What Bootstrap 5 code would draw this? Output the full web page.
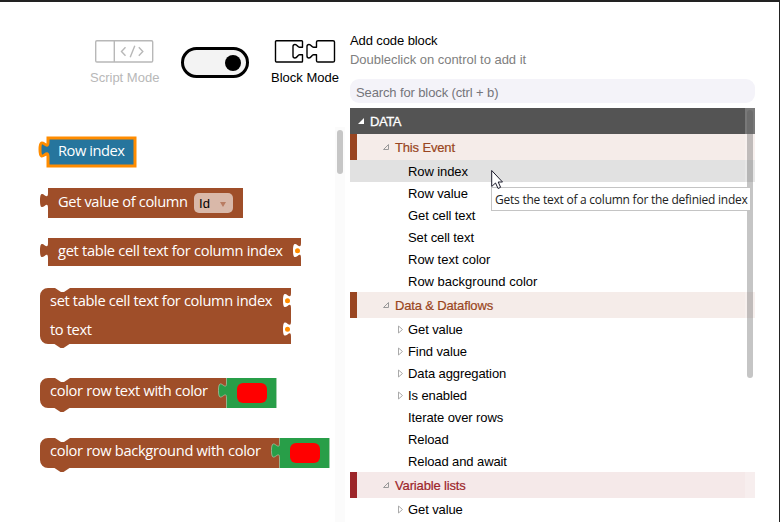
<!DOCTYPE html>
<html lang="en">
<head>
<meta charset="utf-8">
<title>Block editor</title>
<link rel="stylesheet" href="https://cdn.jsdelivr.net/npm/bootstrap@5.3.0/dist/css/bootstrap.min.css">
<style>
body{font:13px/20px "Liberation Sans",Arial,sans-serif;color:#000;background:#fff;width:780px;height:522px}
.app-frame{width:780px;height:522px;border-top:2px solid #222;border-right:1px solid #222;background:#fff}
.left-pane{width:345px}
.mode-bar{height:125px;padding:37px 0 0 90px}
.mode-item{width:70px;height:50px}
.mode-item svg{display:block}
.mode-item.off{color:#b8b8b8}
.mode-item .lbl{white-space:nowrap;line-height:18px;margin-top:5px}
.toggle{width:68px;height:31px;border:3px solid #000;background:#f3f3f3;margin:8px 22px 0 21px;padding-right:5px}
.knob{width:16px;height:16px;background:#000}
.canvas-text text{font-family:"Open Sans","Noto Sans",sans-serif;font-size:14.67px;fill:#fff}
.track-l{width:10px;background:#fbfbfb;padding:3px 2px 0}
.thumb-l{height:44px;border-radius:3px;background:#c6c6c6}
.right-pane{width:405px;margin-left:5px;padding-top:29px;letter-spacing:-.1px}
.pane-title{line-height:19px}
.pane-hint{color:#808080;letter-spacing:-.03px}
.search{height:24px;border-radius:9px;background:#f4f3f9;color:#75757b;padding:0 6px;margin-top:9px;line-height:27px;letter-spacing:-.12px}
.tree{margin-top:5px;height:414px}
.tree-row{height:22px;line-height:23px;padding-left:58px;white-space:nowrap}
.tree-row.wide{letter-spacing:0}
.tree-row.sub{padding-left:48px}
.tree-row.sub svg{width:5px;margin-right:5px}
.root{height:26px;background:#545454;color:#fff;padding-left:7px;white-space:nowrap;-webkit-text-stroke:.3px #fff;letter-spacing:-.4px}
.group{height:26px;background:#f5ece9;color:#994521;border-left:7px solid #994521;padding-left:25px;white-space:nowrap;-webkit-text-stroke:.2px currentColor;letter-spacing:-.15px}
.root span,.group span{padding-top:1px}
.group.red{background:#f5e9e9;color:#9c2529;border-color:#9c2529}
.hov{background:#e1e1e1}
.track-r{top:0;right:0;width:10px;height:414px;background:rgba(255,255,255,.22);padding:2px 2px 0}
.thumb-r{height:268px;border-radius:3px;background:rgba(85,85,85,.34)}
.tip{left:141px;top:79px;width:260px;height:24px;border:1px solid #c4c4c4;background:#fff;color:#222;font:12px/23px "Open Sans","Noto Sans",sans-serif;padding-left:3px;white-space:nowrap;letter-spacing:-.24px}
.cursor{left:141px;top:61px}
</style>
<script src="https://cdn.jsdelivr.net/npm/bootstrap@5.3.0/dist/js/bootstrap.bundle.min.js"></script>
</head>
<body class="overflow-hidden">
<div class="app-frame d-flex overflow-hidden">
  <div class="left-pane d-flex flex-column flex-shrink-0">
    <div class="mode-bar d-flex align-items-start flex-shrink-0">
      <div class="mode-item off">
        <svg width="70" height="25" fill="none" stroke="currentColor" stroke-width="1.4"><rect x="5.7" y="1.7" width="57" height="21.3" rx="1.2"/><path d="M24.3 1.7V23M35.500 8.300l-4 4.200 4 4.200M48.800 8.300l4 4.200-4 4.200M44.800 6.700l-4.600 11.600"/></svg>
        <div class="lbl"><span>Script Mode</span></div>
      </div>
      <div class="toggle rounded-pill d-flex align-items-center justify-content-end flex-shrink-0"><div class="knob rounded-circle"></div></div>
      <div class="mode-item">
        <svg width="70" height="25" fill="none" stroke="#000" stroke-width="1.4" stroke-linejoin="round"><path d="M31.500 8.200V2.500Q31.500 1.700 30.700 1.700H5.500Q4.500 1.700 4.500 2.700V22Q4.500 23 5.500 23H30.700Q31.500 23 31.500 22.200V15.800H28.500C26.500 15.800 26.500 19 24 19Q22 19 22 17V7.500Q22 5.500 24 5.500C26.500 5.500 26.500 8.200 28.500 8.200Z"/><path d="M45.500 8.200V3Q45.500 1.700 47 1.700H62Q63.500 1.700 63.500 3V21.700Q63.500 23 62 23H47Q45.500 23 45.500 21.700V15.800H42.500C40.500 15.800 40.500 19 38 19Q36 19 36 17V7.500Q36 5.500 38 5.500C40.500 5.500 40.500 8.200 42.500 8.200Z"/></svg>
        <div class="lbl"><span>Block Mode</span></div>
      </div>
    </div>
    <div class="d-flex flex-grow-1">
      <svg class="canvas-text flex-shrink-0" width="335" height="395" viewBox="0 127 335 395">
        <path d="M48 138H135V166H48V157c0-10-8 8-8-7.500s8 2.500 8-7.500Z" fill="#26759d" stroke="#ff8c00" stroke-width="3"/>
        <text x="58" y="156" textLength="67">Row index</text>
        <g fill="#9f4e29">
          <path d="M48 188h195v30H48v-10c0-10-8 8-8-7.500s8 2.500 8-7.500Z"/>
          <path d="M48 238h253v28H48v-8c0-10-8 8-8-7.500s8 2.500 8-7.500Z"/>
          <path d="M40 296a8 8 0 0 1 8-8h7l6 4h3l6-4H291V344H69.500l-6 4h-3l-6-4H48a8 8 0 0 1-8-8Z"/>
          <path d="M40 386a8 8 0 0 1 8-8h7l6 4h3l6-4H227V408H69.500l-6 4h-3l-6-4H48a8 8 0 0 1-8-8Z"/>
          <path d="M40 446a8 8 0 0 1 8-8h7l6 4h3l6-4H280V468H69.500l-6 4h-3l-6-4H48a8 8 0 0 1-8-8Z"/>
        </g>
        <g fill="#fff">
          <path d="M301 243c0 10-8-8-8 7.500s8-2.500 8 7.500Z"/>
          <path d="M291 293c0 10-8-8-8 7.500s8-2.500 8 7.500Z"/>
          <path d="M291 321.500c0 10-8-8-8 7.500s8-2.500 8 7.500Z"/>
        </g>
        <g fill="#ff8c00"><circle cx="297.500" cy="250.700" r="2.500"/><circle cx="287.500" cy="300.700" r="2.500"/><circle cx="287.500" cy="329.200" r="2.500"/></g>
        <g fill="#289e48">
          <path d="M226.500 378h50v30h-50v-10c0-10-8 8-8-7.500s8 2.500 8-7.500Z"/>
          <path d="M279.500 438h50v30h-50v-10c0-10-8 8-8-7.500s8 2.500 8-7.500Z"/>
        </g>
        <g fill="none" stroke="#a9cdb0" stroke-width=".7">
          <path d="M276.500 378v30M226.500 408v-10c0-10-8 8-8-7.500s8 2.500 8-7.500v-5"/>
          <path d="M329.500 438v30M279.500 468v-10c0-10-8 8-8-7.500s8 2.500 8-7.500v-5"/>
        </g>
        <rect x="237" y="383" width="30" height="20" rx="6" fill="#f00"/>
        <rect x="290" y="443" width="30" height="20" rx="6" fill="#f00"/>
        <rect x="194" y="193" width="39" height="20" rx="5" fill="#d9b8a9"/>
        <text x="199" y="208" textLength="11" style="fill:#000;font-size:13px;font-family:'Liberation Sans',sans-serif">Id</text>
        <path d="M220 202h6l-3 5Z" fill="#b97c62"/>
        <text x="58" y="207" textLength="130">Get value of column</text>
        <text x="58" y="256" textLength="225">get table cell text for column index</text>
        <text x="50" y="306" textLength="222.500">set table cell text for column index</text>
        <text x="50" y="335" textLength="42">to text</text>
        <text x="50" y="396" textLength="158">color row text with color</text>
        <text x="50" y="456" textLength="211">color row background with color</text>
      </svg>
      <div class="track-l flex-shrink-0"><div class="thumb-l"></div></div>
    </div>
  </div>
  <div class="right-pane flex-shrink-0">
    <div class="pane-title"><span>Add code block</span></div>
    <div class="pane-hint"><span>Doubleclick on control to add it</span></div>
    <div class="search"><span>Search for block (ctrl + b)</span></div>
    <div class="tree position-relative overflow-hidden">
      <div class="root d-flex align-items-center"><svg width="13" height="8"><path d="M1 7h6V1Z" fill="#fff"/></svg><span>DATA</span></div>
      <div class="group d-flex align-items-center"><svg width="13" height="8"><path d="M1.500 6.500h5v-5Z" fill="none" stroke="#999"/></svg><span>This Event</span></div>
      <div class="tree-row hov"><span>Row index</span></div>
      <div class="tree-row"><span>Row value</span></div>
      <div class="tree-row"><span>Get cell text</span></div>
      <div class="tree-row"><span>Set cell text</span></div>
      <div class="tree-row wide"><span>Row text color</span></div>
      <div class="tree-row wide"><span>Row background color</span></div>
      <div class="group d-flex align-items-center"><svg width="13" height="8"><path d="M1.500 6.500h5v-5Z" fill="none" stroke="#999"/></svg><span>Data &amp; Dataflows</span></div>
      <div class="tree-row sub d-flex align-items-center"><svg height="9"><path d="M.5 1v7L4.500 4.500Z" fill="none" stroke="#aaa"/></svg><span>Get value</span></div>
      <div class="tree-row sub d-flex align-items-center"><svg height="9"><path d="M.5 1v7L4.500 4.500Z" fill="none" stroke="#aaa"/></svg><span>Find value</span></div>
      <div class="tree-row sub d-flex align-items-center"><svg height="9"><path d="M.5 1v7L4.500 4.500Z" fill="none" stroke="#aaa"/></svg><span>Data aggregation</span></div>
      <div class="tree-row sub d-flex align-items-center"><svg height="9"><path d="M.5 1v7L4.500 4.500Z" fill="none" stroke="#aaa"/></svg><span>Is enabled</span></div>
      <div class="tree-row"><span>Iterate over rows</span></div>
      <div class="tree-row"><span>Reload</span></div>
      <div class="tree-row"><span>Reload and await</span></div>
      <div class="group red d-flex align-items-center"><svg width="13" height="8"><path d="M1.500 6.500h5v-5Z" fill="none" stroke="#999"/></svg><span>Variable lists</span></div>
      <div class="tree-row sub d-flex align-items-center"><svg height="9"><path d="M.5 1v7L4.500 4.500Z" fill="none" stroke="#aaa"/></svg><span>Get value</span></div>
      <div class="track-r position-absolute"><div class="thumb-r"></div></div>
      <div class="tip position-absolute"><span>Gets the text of a column for the definied index</span></div>
      <svg class="cursor position-absolute" width="14" height="20"><path d="M.7 1.500V17.500L4.500 14l2.600 5.500 2.500-1.200L7.200 13h4.300Z" fill="#fff" stroke="#1a1a2a"/></svg>
    </div>
  </div>
</div>
</body>
</html>
